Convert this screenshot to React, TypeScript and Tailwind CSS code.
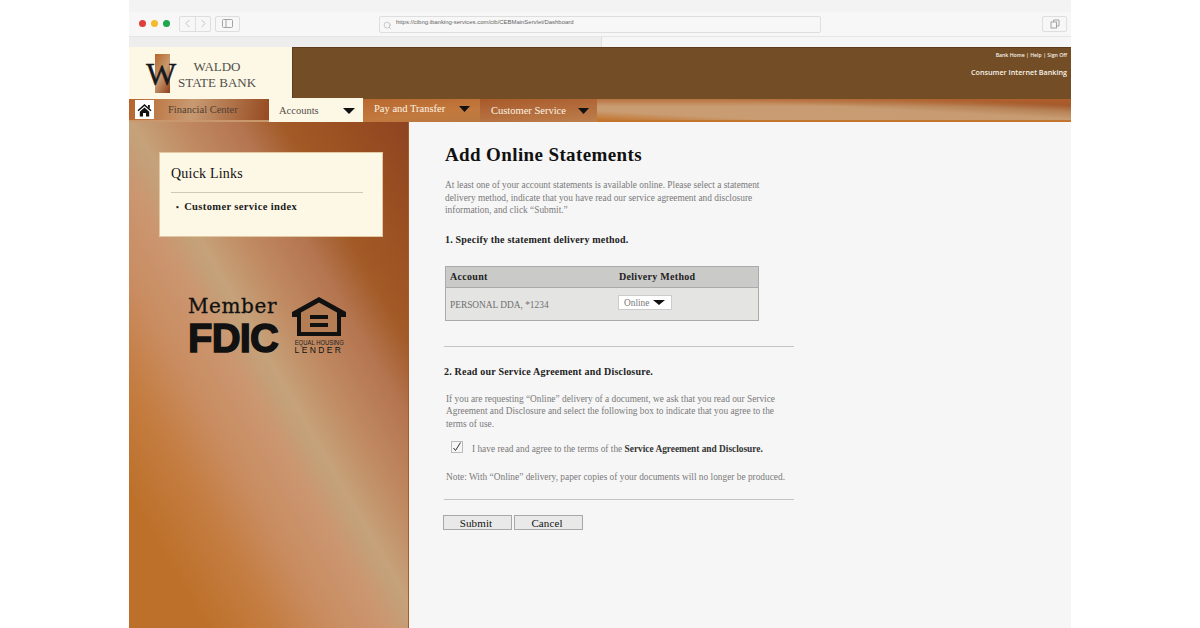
import React from "react";
import { ChevronLeft, ChevronRight, Search } from "lucide-react";

const serif = "font-['Liberation_Serif',serif]";
const Tri = ({ w = 13, h = 7 }: { w?: number; h?: number }) => (
  <svg width={w} height={h} viewBox="0 0 13 7" preserveAspectRatio="none" className="shrink-0"><path d="M0 0H13L6.5 7Z" fill="#111" /></svg>
);

export default function App() {
  return (
    <div className="w-full h-[628px] bg-white flex justify-center overflow-hidden">
      <div className="w-[942px] h-[628px] flex flex-col font-['Liberation_Sans',sans-serif]">
        {/* browser chrome */}
        <div className="h-[12px] bg-[#f3f3f3]" />
        <div className="h-[25px] bg-[#f7f7f7] border-b border-[#e6e6e6] flex items-center pl-[10px] pr-[4px]">
          <div className="flex gap-[5px] w-[40px] -mt-[1px]">
            <span className="w-[7px] h-[7px] rounded-full bg-[#df3e3a]" />
            <span className="w-[7px] h-[7px] rounded-full bg-[#f5bb2c]" />
            <span className="w-[7px] h-[7px] rounded-full bg-[#1fa64e]" />
          </div>
          <div className="flex h-[16px] border border-[#dedede] rounded-[2px] text-[#a8a8a8] -mt-[1px]">
            <div className="w-[16px] flex items-center justify-center border-r border-[#dedede]"><ChevronLeft size={13} strokeWidth={1.2} /></div>
            <div className="w-[14px] flex items-center justify-center"><ChevronRight size={13} strokeWidth={1.2} /></div>
          </div>
          <div className="ml-[4px] w-[25px] h-[16px] border border-[#dedede] rounded-[2px] flex items-center justify-center -mt-[1px]">
            <svg width="11" height="9" viewBox="0 0 11 9" fill="none" stroke="#a3a3a3"><rect x=".5" y=".5" width="10" height="8" rx="1" /><path d="M4 .5v8" /></svg>
          </div>
          <div className="ml-[139px] w-[442px] h-[17px] border border-[#dedede] rounded-[2px] flex items-center pl-[3px] gap-[4px]">
            <Search size={9} strokeWidth={1.3} className="text-[#999] mt-[2px]" />
            <span className="text-[5.95px] text-[#666] leading-none -mt-[2px] whitespace-nowrap">https://cibng.ibanking-services.com/cib/CEBMainServlet/Dashboard</span>
          </div>
          <div className="ml-auto w-[25px] h-[16px] border border-[#dedede] rounded-[2px] flex items-center justify-center">
            <svg width="10" height="10" viewBox="0 0 10 10" fill="none" stroke="#a3a3a3"><rect x="1" y="3" width="5.5" height="6" /><path d="M3.5 3V1H9v6H6.5" /></svg>
          </div>
        </div>
        <div className="h-[10px] flex">
          <div className="w-[472px] bg-[#ededed]" />
          <div className="flex-1 bg-[#f6f6f6] border-l border-[#e0e0e0]" />
        </div>

        {/* bank header */}
        <div className="h-[52px] flex">
          <div className="w-[164px] bg-[#fdf7e6] flex items-center pl-[16px] border-r border-[#5e3b1c]">
            <div className="relative w-[32px] h-[40px] flex items-center justify-center">
              <div className="absolute left-[10px] top-[1px] w-[15px] h-[39px] bg-[linear-gradient(120deg,#b5652a,#c89a70_50%,#8c3d18)]" />
              <span className={`relative ${serif} text-[32px] leading-none text-[#15191f] mt-[1px] [-webkit-text-stroke:0.4px_#15191f]`}>W</span>
            </div>
            <div className={`${serif} ml-[1px] mt-[4px] text-[13px] leading-[16px] text-[#4f4f49] text-center`}>
              <div>WALDO</div>
              <div>STATE BANK</div>
            </div>
          </div>
          <div className="flex-1 bg-[#724d25] border-t border-[#5e3b1c] flex flex-col items-end pr-[4px] pt-[2px] text-[#f8f2e8] font-['Open_Sans',sans-serif]">
            <div className="text-[5.2px] leading-[10px] font-semibold">Bank Home | Help | Sign Off</div>
            <div className="text-[7.2px] leading-[12px] mt-[6px] font-semibold">Consumer Internet Banking</div>
          </div>
        </div>

        {/* nav */}
        <div className={`h-[23px] flex ${serif} text-[10.5px]`}>
          <div className="w-[140px] flex items-center pl-[6px] border-b-[2px] border-[#c8986c] bg-[linear-gradient(100deg,#b7642b_0%,#c89a72_45%,#964a20_100%)]">
            <div className="w-[19px] h-[19px] bg-white flex items-center justify-center">
              <svg width="15" height="14" viewBox="0 0 15 14"><path d="M7.5 1 0.5 7.2l1 1.1L7.5 3l6 5.3 1-1.1ZM11 2v2l1.8 1.6V2Z" fill="#111" /><path d="M2.8 8.7 7.5 4.5l4.7 4.2V13.5H9V10H6v3.5H2.8Z" fill="#111" /></svg>
            </div>
            <span className="ml-[14px] mt-[1px] text-[#4f3f32]">Financial Center</span>
          </div>
          <div className="w-[94px] bg-[#fdf7e6] flex items-center justify-between pl-[10px] pr-[8px] text-[#55514a] pt-[2px] -mt-[1px]">
            <span>Accounts</span><Tri w={12} h={6} />
          </div>
          <div className="w-[117px] flex items-center justify-between pl-[11px] pr-[10px] text-[#fdf3e3] pb-[3px] bg-[linear-gradient(175deg,#b8682e,#c2793e_60%,#b9783f)]">
            <span>Pay and Transfer</span><Tri w={11} h={6} />
          </div>
          <div className="w-[117px] flex items-center justify-between pl-[11px] pr-[8px] text-[#fdf3e3] bg-[linear-gradient(175deg,#a9592a,#bd7f4d)]">
            <span>Customer Service</span><Tri w={11} h={6} />
          </div>
          <div className="flex-1 border-b-[2px] border-[#c3742e] bg-[linear-gradient(180deg,rgba(180,100,45,0.75)_0%,rgba(180,100,45,0)_35%),linear-gradient(183deg,#9c4f24_0%,#a45a2c_14%,#b78256_28%,#c89c72_44%,#c99c72_80%,#c3742e_100%)]" />
        </div>

        {/* body */}
        <div className="flex-1 flex min-h-0">
          <aside className="w-[280px] pl-[30px] pt-[30px] border-r border-[#a9582a] bg-[linear-gradient(240deg,#8e4420_0%,#9b5022_12%,#a25a26_22%,#b47550_30%,#c08a62_40%,#c6a27a_48.5%,#c4a078_50%,#cb9670_55%,#c98c60_65%,#c47c40_75%,#bc7029_87%,#bc7029_100%)]">
            <div className={`w-[224px] h-[85px] bg-[#fdf7e6] border border-[#e3c8a4] pl-[11px] pt-[11px] ${serif}`}>
              <div className="text-[14px] leading-[20px] text-[#111] tracking-[0.015em]">Quick Links</div>
              <div className="w-[192px] h-px bg-[#ccc9bb] mt-[8px]" />
              <div className="mt-[7px] pl-[5px] text-[10.5px] leading-[13px] font-bold text-[#1a1a1a] tracking-[0.035em]">
                <span className="text-[8px] mr-[5px]">•</span>Customer service index
              </div>
            </div>
            <div className="flex mt-[58px] pl-[29px] items-start text-[#111]">
              <div className="w-[92px] flex flex-col">
                <span className="font-['DejaVu_Serif',serif] text-[20px] leading-[22px] tracking-[0.03em] whitespace-nowrap [-webkit-text-stroke:0.3px_#111]">Member</span>
                <span className="mt-[2px] font-['Liberation_Sans',sans-serif] font-bold text-[40px] leading-[38px] tracking-[-0.02em] [-webkit-text-stroke:1.4px_#111] whitespace-nowrap">FDIC</span>
              </div>
              <div className="ml-[12px] w-[54px] flex flex-col items-center">
                <svg width="54" height="40" viewBox="0 0 54 40" fill="none" className="mt-[2px]">
                  <path d="M0 15 27 0l27 15v5h-5v19H5V20H0Z" fill="#111" />
                  <path d="M9 15.5 27 5.5l18 10V35H9Z" fill="#b47d54" />
                  <rect x="18" y="18" width="18" height="4" fill="#111" /><rect x="18" y="26" width="18" height="4" fill="#111" />
                </svg>
                <span className="mt-[2px] text-[8px] leading-[7px] scale-x-[0.74] whitespace-nowrap text-[#222]">EQUAL HOUSING</span>
                <span className="text-[8.5px] leading-[8px] tracking-[0.28em] whitespace-nowrap text-[#111]">LENDER</span>
              </div>
            </div>
          </aside>

          <main className={`flex-1 bg-[#f6f6f6] pl-[35px] ${serif} text-[#7a7a7a] text-[9.35px]`}>
            <div className="w-[350px]">
              <h1 className="mt-[21px] text-[19px] leading-[24px] font-bold text-[#111] tracking-[0.02em] pl-[1px]">Add Online Statements</h1>
              <p className="mt-[12px] pl-[1px] leading-[12.5px] w-[320px]">At least one of your account statements is available online. Please select a statement delivery method, indicate that you have read our service agreement and disclosure information, and click “Submit.”</p>
              <h2 className="mt-[16px] pl-[1px] text-[10px] leading-[14px] font-bold text-[#222] tracking-[0.02em]">1. Specify the statement delivery method.</h2>
              <div className="mt-[19px] ml-[1px] w-[314px] border border-[#aaa] bg-[#e4e4e2]">
                <div className="h-[21px] bg-[#cacac8] border-b border-[#aaa] flex items-center font-bold text-[10px] text-[#222] tracking-[0.03em]">
                  <span className="w-[173px] pl-[4px]">Account</span><span>Delivery Method</span>
                </div>
                <div className="h-[32px] flex items-center">
                  <span className="w-[172px] pl-[4px] text-[#6f6f6f] pt-[4px]">PERSONAL DDA, *1234</span>
                  <div className="w-[54px] h-[15px] bg-white border border-[#ccc] flex items-center pl-[5px] gap-[4px] -mt-[2px]">
                    <span className="mt-[1px]">Online</span><Tri w={12} h={5} />
                  </div>
                </div>
              </div>
              <div className="mt-[25px] h-px bg-[#c4c4c4]" />
              <h2 className="mt-[18px] text-[10px] leading-[14px] font-bold text-[#222] tracking-[0.02em]">2. Read our Service Agreement and Disclosure.</h2>
              <p className="mt-[14px] pl-[2px] leading-[12.5px] w-[335px]">If you are requesting “Online” delivery of a document, we ask that you read our Service Agreement and Disclosure and select the following box to indicate that you agree to the terms of use.</p>
              <div className="mt-[12px] pl-[7px] flex items-center">
                <div className="w-[12px] h-[12px] border border-[#bbb] bg-[#f6f6f6] flex items-center justify-center -mt-[4px]">
                  <svg width="10" height="10" viewBox="0 0 10 10" fill="none" stroke="#333" strokeWidth="1"><path d="M1.5 6 3.5 8.5 8.5 .5" /></svg>
                </div>
                <span className="ml-[9px] whitespace-nowrap">I have read and agree to the terms of the <b className="text-[#333]">Service Agreement and Disclosure.</b></span>
              </div>
              <p className="mt-[15px] pl-[2px] leading-[13px] whitespace-nowrap">Note: With “Online” delivery, paper copies of your documents will no longer be produced.</p>
              <div className="mt-[15px] h-px bg-[#c4c4c4]" />
              <div className="mt-[15px] -ml-[1px] flex gap-[2px] text-[11px] text-[#111] tracking-[0.01em]">
                <button className="w-[69px] h-[15px] leading-[14px] pr-[3px] bg-[#e9e9e9] border border-[#a8a8a8]">Submit</button>
                <button className="w-[69px] h-[15px] leading-[14px] pr-[3px] bg-[#e9e9e9] border border-[#a8a8a8]">Cancel</button>
              </div>
            </div>
          </main>
        </div>
      </div>
    </div>
  );
}
